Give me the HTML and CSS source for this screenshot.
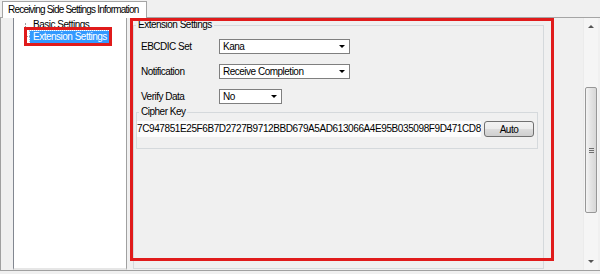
FILE: index.html
```html
<!DOCTYPE html>
<html lang="en">
<head>
  <meta charset="UTF-8" />
  <title>Receiving Side Settings Information</title>
  <link rel="stylesheet" href="styles.css">
</head>
<body>
  <div class="tabs">
    <div class="tab">Receiving Side Settings Information</div>
  </div>

  <div class="panel">
    <!-- left tree -->
    <div class="tree">
      <span class="tree-line"></span>
      <ul>
        <li class="node">Basic Settings</li>
        <li class="node selected">Extension Settings</li>
      </ul>
      <span class="mark mark-tree"></span>
    </div>

    <!-- settings page -->
    <div class="settings">
      <fieldset class="group outer">
        <legend>Extension Settings</legend>
        <div class="row first">
          <label>EBCDIC Set</label>
          <div class="combo wide">Kana</div>
        </div>
        <div class="row">
          <label>Notification</label>
          <div class="combo wide">Receive Completion</div>
        </div>
        <div class="row last">
          <label>Verify Data</label>
          <div class="combo short">No</div>
        </div>
        <fieldset class="group key-group">
          <legend>Cipher Key</legend>
          <div class="key-row">
            <div class="key-text">7C947851E25F6B7D2727B9712BBD679A5AD613066A4E95B035098F9D471CD8</div>
            <button class="btn">Auto</button>
          </div>
        </fieldset>
      </fieldset>
      <span class="mark mark-settings"></span>
    </div>

    <div class="scrollbar">
      <div class="arrow"><span class="tri up"></span></div>
      <div class="track">
        <div class="thumb"><span class="grip"></span></div>
      </div>
      <div class="arrow"><span class="tri down"></span></div>
    </div>
  </div>
</body>
</html>
```

FILE: styles.css
```css
* { box-sizing: border-box; }
body {
  margin: 0; width: 600px; height: 274px; overflow: hidden;
  background: #f0f0f0; color: #000;
  font-family: "Liberation Sans", Arial, sans-serif; font-size: 10px; letter-spacing: -0.5px;
}

/* tab header */
.tabs { display: flex; height: 17px; padding: 1px 0 0 2px; }
.tab {
  position: relative; z-index: 1;
  width: 145px; height: 17px; padding: 0 5px; line-height: 15px;
  white-space: nowrap; letter-spacing: -0.8px;
  background: #fff; border: 1px solid #a5a5a5; border-bottom: none;
}

.panel {
  display: flex; height: 254px; padding-left: 12px;
  border-top: 1px solid #a5a5a5; border-bottom: 1px solid #a0a0a0; border-left: 1px solid #a0a0a0;
}

/* tree */
.tree {
  position: relative; width: 114px; padding-top: 1px;
  background: #fff; border-left: 1px solid #828790; border-right: 1px solid #a0a0a0;
  border-bottom: 2px solid #e6e6e6;
}
.tree ul { list-style: none; margin: 0; padding: 0 0 0 16px; }
.node { height: 12px; line-height: 12px; padding: 0 2px 0 3px; white-space: nowrap; }
.node.selected { display: table; background: #3399ff; color: #fff; outline: 1px dotted #9cc6f0; }
.tree-line {
  position: absolute; left: 11px; top: 5px; width: 5px; height: 14px;
  border-left: 1px dotted #a0a0a0; border-bottom: 1px dotted #a0a0a0;
}

/* red annotation frames */
.mark { position: absolute; border: 3px solid #e01b1b; pointer-events: none; }
.mark-tree { left: 10px; top: 9px; width: 88px; height: 19px; }
.mark-settings { left: 3px; top: 0; width: 424px; height: 243px; }

/* settings */
.settings { position: relative; width: 456px; }
.group { margin: 0; padding: 0 0 0 2px; border: 1px solid #d5d9dc; }
.group legend { padding: 0 2px; line-height: 12px; }
.outer { margin: 1px 0 0 6px; width: 411px; height: 250px; }

.row { display: flex; align-items: center; height: 15px; margin: 0 0 10px 5px; }
.row.first { margin-top: 8px; }
.row.last { margin-bottom: 0; }
.row label { width: 78px; }
.combo {
  display: flex; align-items: center; justify-content: space-between;
  height: 15px; padding: 0 4px 0 3px; line-height: 13px;
  background: #fff; border: 1px solid #7f7f7f;
}
.combo::after {
  content: ""; width: 0; height: 0;
  border-left: 3px solid transparent; border-right: 3px solid transparent; border-top: 3px solid #000;
}
.wide { width: 131px; }
.short { width: 63px; }

.key-group { margin-top: 2px; width: 402px; height: 43px; }
.key-row { display: flex; height: 16px; margin: 3px 0 0 -2px; }
.key-text {
  width: 344px; line-height: 16px; background: #fcfcfc;
  letter-spacing: -0.4px; white-space: nowrap; overflow: hidden;
}
.btn {
  width: 50px; height: 16px; margin-left: 3px; padding: 0;
  font: inherit; letter-spacing: inherit; color: #000;
  border: 1px solid #707070; border-radius: 3px;
  background: linear-gradient(#f2f2f2, #ebebeb 50%, #dddddd 50%, #cfcfcf);
}

/* scrollbar */
.scrollbar {
  display: flex; flex-direction: column; width: 15px;
  background: #f5f5f5; border-left: 1px solid #ebebeb;
}
.arrow { display: flex; align-items: center; justify-content: center; height: 17px; }
.tri { width: 0; height: 0; border-left: 3px solid transparent; border-right: 3px solid transparent; }
.tri.up { border-bottom: 3px solid #555; }
.tri.down { border-top: 3px solid #555; }
.track { flex: 1; padding: 52px 0 0 1px; }
.thumb {
  display: flex; align-items: center; justify-content: center;
  width: 12px; height: 126px;
  border: 1px solid #979797; border-radius: 2px;
  background: linear-gradient(to right, #f4f4f4, #e3e3e3 50%, #d7d7d7);
}
.grip {
  width: 5px; height: 5px;
  background: repeating-linear-gradient(#6e6e6e 0 1px, transparent 1px 2px);
}
```
